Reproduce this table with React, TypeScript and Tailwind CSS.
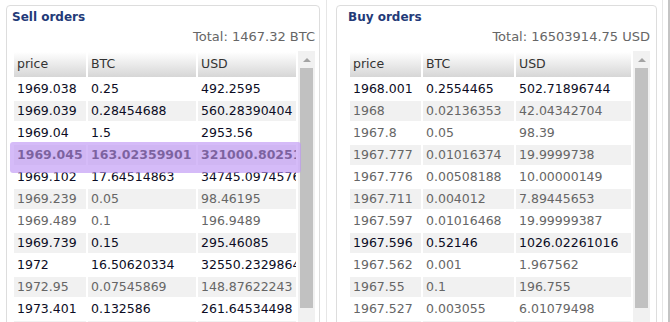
import React from "react";

type Row = { p: string; b: string; u: string; dark?: boolean; hl?: boolean };

const sell: Row[] = [
  { p: "1969.038", b: "0.25", u: "492.2595", dark: true },
  { p: "1969.039", b: "0.28454688", u: "560.28390404", dark: true },
  { p: "1969.04", b: "1.5", u: "2953.56", dark: true },
  { p: "1969.045", b: "163.02359901", u: "321000.80251305", hl: true },
  { p: "1969.102", b: "17.64514863", u: "34745.09745768", dark: true },
  { p: "1969.239", b: "0.05", u: "98.46195" },
  { p: "1969.489", b: "0.1", u: "196.9489" },
  { p: "1969.739", b: "0.15", u: "295.46085", dark: true },
  { p: "1972", b: "16.50620334", u: "32550.23298648", dark: true },
  { p: "1972.95", b: "0.07545869", u: "148.87622243" },
  { p: "1973.401", b: "0.132586", u: "261.64534498", dark: true },
  { p: "1973.5", b: "0.2", u: "394.7" },
];

const buy: Row[] = [
  { p: "1968.001", b: "0.2554465", u: "502.71896744", dark: true },
  { p: "1968", b: "0.02136353", u: "42.04342704" },
  { p: "1967.8", b: "0.05", u: "98.39" },
  { p: "1967.777", b: "0.01016374", u: "19.9999738" },
  { p: "1967.776", b: "0.00508188", u: "10.00000149" },
  { p: "1967.711", b: "0.004012", u: "7.89445653" },
  { p: "1967.597", b: "0.01016468", u: "19.99999387" },
  { p: "1967.596", b: "0.52146", u: "1026.02261016", dark: true },
  { p: "1967.562", b: "0.001", u: "1.967562" },
  { p: "1967.55", b: "0.1", u: "196.755" },
  { p: "1967.527", b: "0.003055", u: "6.01079498" },
  { p: "1967.5", b: "0.01", u: "19.675" },
];

function Scrollbar() {
  return (
    <div className="w-[17px] mt-[1px] bg-[#f1f1f1] flex flex-col shrink-0">
      <div className="h-[17px] flex items-center justify-center">
        <div className="w-0 h-0 border-l-[4px] border-r-[4px] border-b-[4px] border-l-transparent border-r-transparent border-b-[#a3a3a3]" />
      </div>
      <div className="mx-[2px] h-[240px] bg-[#c1c1c1]" />
    </div>
  );
}

function OrderTable({ rows, widths }: { rows: Row[]; widths: [string, string] }) {
  const td = "h-[20px] py-0 pl-[3px] pr-0 leading-[20px] overflow-hidden whitespace-nowrap";
  const th =
    "h-[25px] py-0 pl-[3px] pr-0 text-left font-normal text-[#333] bg-linear-to-b from-white to-[#d6d6d6] overflow-hidden whitespace-nowrap";
  return (
    <table className="table-fixed border-separate border-spacing-[2px] w-full text-[12.5px]">
      <colgroup>
        <col className={widths[0]} />
        <col className={widths[1]} />
        <col />
      </colgroup>
      <thead>
        <tr>
          <th className={th}>price</th>
          <th className={th}>BTC</th>
          <th className={th}>USD</th>
        </tr>
      </thead>
      <tbody>
        {rows.map((r, i) => {
          const bg = i % 2 === 1 ? "bg-[#f1f1f1]" : "bg-white";
          const color = r.hl
            ? "text-black font-bold"
            : r.dark
            ? "text-[#0c0c24]"
            : "text-[#666]";
          return (
            <tr key={i} className={color}>
              <td className={`${td} ${bg}`}>{r.p}</td>
              <td className={`${td} ${bg}`}>{r.b}</td>
              <td className={`${td} ${bg}`}>{r.u}</td>
            </tr>
          );
        })}
      </tbody>
    </table>
  );
}

export default function App() {
  return (
    <div className="w-[670px] h-[322px] overflow-hidden bg-white flex font-['DejaVu_Sans',sans-serif]">
      {/* Sell column */}
      <div className="w-[327px] shrink-0 border-r border-[#e6e6e6] pl-[6px] pt-[5px]">
        <div className="relative w-[314px] h-[420px] border border-[#dddddd] rounded-[4px] pl-[5px] pr-[4px] pt-[3px]">
          <div className="text-[12px] leading-[16px] font-bold text-[#233a78]">Sell orders</div>
          <div className="mt-[4px] text-right text-[13px] leading-[16px] text-[#666]">Total: 1467.32 BTC</div>
          <div className="mt-[5px] flex h-[300px] overflow-hidden">
            <div className="flex-1 overflow-hidden">
              <OrderTable rows={sell} widths={["w-[72px]", "w-[108px]"]} />
            </div>
            <Scrollbar />
          </div>
          <div className="absolute left-[3px] top-[136px] w-[291px] h-[31px] rounded-[3px] bg-[rgba(190,150,245,0.65)]" />
        </div>
      </div>
      {/* Buy column */}
      <div className="w-[336px] shrink-0 border-r border-[#e6e6e6] pl-[9px] pt-[5px]">
        <div className="relative w-[321px] h-[420px] border border-[#dddddd] rounded-[4px] pl-[11px] pr-[6px] pt-[3px]">
          <div className="text-[12px] leading-[16px] font-bold text-[#233a78]">Buy orders</div>
          <div className="mt-[4px] text-right text-[13px] leading-[16px] text-[#666]">Total: 16503914.75 USD</div>
          <div className="mt-[5px] flex h-[300px] overflow-hidden">
            <div className="flex-1 overflow-hidden">
              <OrderTable rows={buy} widths={["w-[71px]", "w-[91px]"]} />
            </div>
            <Scrollbar />
          </div>
        </div>
      </div>
      <div className="flex-1" />
      <div className="w-[2px] bg-[#c4c4c4]" />
    </div>
  );
}
